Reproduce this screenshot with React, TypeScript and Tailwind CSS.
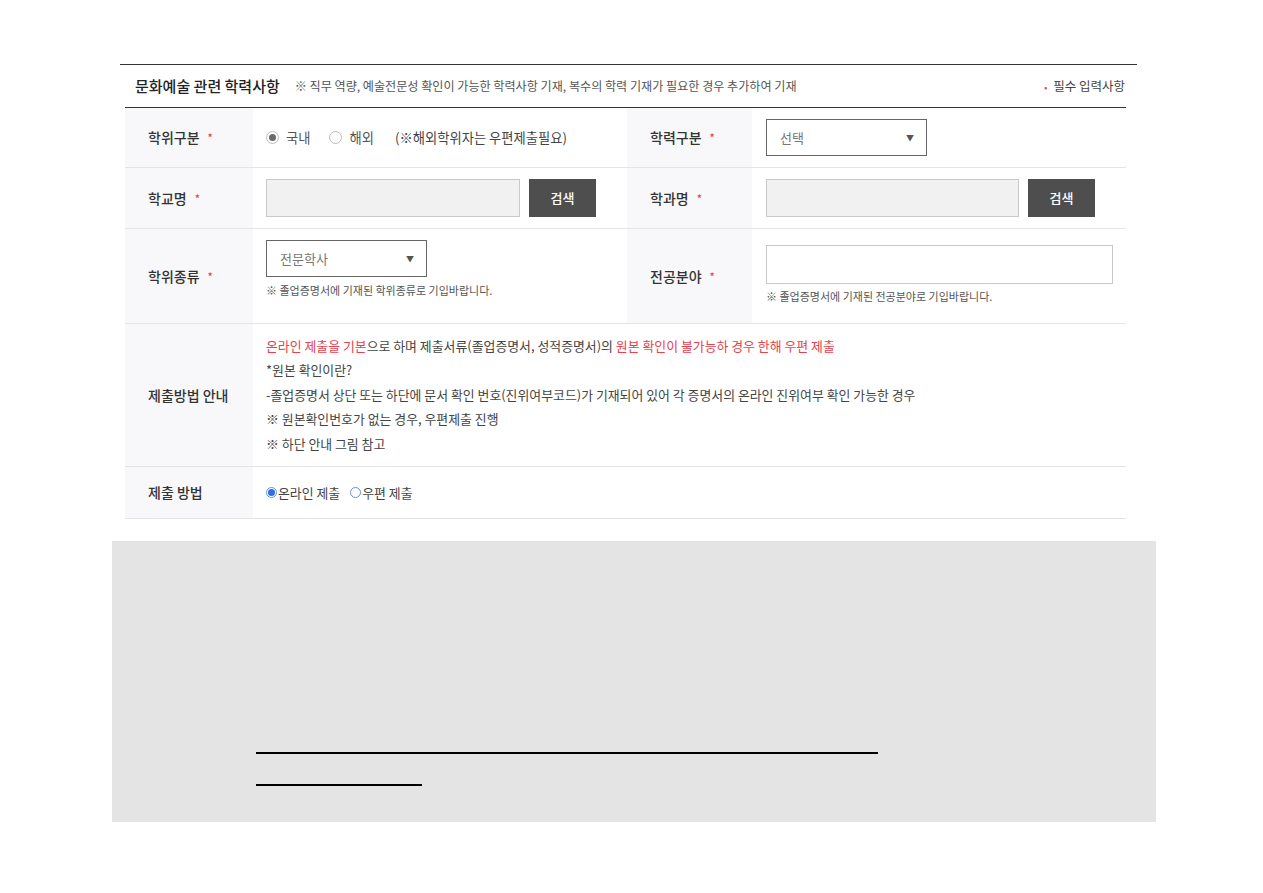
import * as React from "react";

const font = { fontFamily: '"Noto Sans CJK KR", "Noto Sans", sans-serif' };

function Req() {
  return <span className="ml-2 text-[11px] text-[#e8414e]">*</span>;
}

function Label({ children, req = true }: { children: React.ReactNode; req?: boolean }) {
  return (
    <div className="flex items-center bg-[#f8f8fa] pl-[23px] text-[14px] font-medium text-[#333]">
      {children}
      {req && <Req />}
    </div>
  );
}

function Radio({ checked, tone = "gray" }: { checked?: boolean; tone?: "gray" | "blue" }) {
  if (tone === "blue") {
    return (
      <span className="flex size-[11px] items-center justify-center rounded-full border border-[#6b8fd6] bg-white">
        {checked && <span className="size-[7px] rounded-full bg-[#2f6de1]" />}
      </span>
    );
  }
  return (
    <span className="flex size-[13px] items-center justify-center rounded-full border border-[#bdbdbd] bg-white">
      {checked && <span className="size-[7px] rounded-full bg-[#6a6a6a]" />}
    </span>
  );
}

function SelectBox({ value }: { value: string }) {
  return (
    <div className="flex h-[37px] w-[161px] items-center justify-between border border-[#666] bg-white pl-[13px] pr-[12px] text-[13px] text-[#777]">
      <span>{value}</span>
      <span className="text-[8px] text-[#555]">▼</span>
    </div>
  );
}

function SearchField({ width }: { width: string }) {
  return (
    <div className="flex items-center gap-[9px]">
      <div className={`h-[38px] ${width} border border-[#c9c9c9] bg-[#f1f1f1]`} />
      <button className="flex h-[38px] w-[67px] items-center justify-center bg-[#4e4e4e] text-[13px] font-medium text-white">
        검색
      </button>
    </div>
  );
}

export default function App() {
  return (
    <div className="min-h-[893px] bg-white pt-[64px]" style={font}>
      {/* section title */}
      <div className="ml-[120px] flex h-[43px] w-[1017px] items-center border-t border-[#333] pl-[15px] pr-[12px]">
        <span className="text-[15px] font-medium text-[#222]">문화예술 관련 학력사항</span>
        <span className="ml-[15px] text-[12.1px] text-[#555]">
          ※ 직무 역량, 예술전문성 확인이 가능한 학력사항 기재, 복수의 학력 기재가 필요한 경우 추가하여 기재
        </span>
        <span className="ml-auto text-[12.5px] text-[#444]">
          <span className="mr-[6px] text-[9px] text-[#e8414e]">•</span>필수 입력사항
        </span>
      </div>

      {/* form table */}
      <div className="ml-[125px] w-[1001px] border-t border-[#333]">
        <div className="grid h-[60px] grid-cols-[128px_374px_125px_374px] border-b border-[#e4e4e4]">
          <Label>학위구분</Label>
          <div className="flex items-center pl-[13px] text-[13.3px] text-[#555]">
            <Radio checked />
            <span className="ml-[7px]">국내</span>
            <span className="ml-[19px]">
              <Radio />
            </span>
            <span className="ml-[7px]">해외</span>
            <span className="ml-[21px] text-[#444]">(※해외학위자는 우편제출필요)</span>
          </div>
          <Label>학력구분</Label>
          <div className="flex items-center pl-[14px]">
            <SelectBox value="선택" />
          </div>
        </div>

        <div className="grid h-[61px] grid-cols-[128px_374px_125px_374px] border-b border-[#e4e4e4]">
          <Label>학교명</Label>
          <div className="flex items-center pl-[13px]">
            <SearchField width="w-[254px]" />
          </div>
          <Label>학과명</Label>
          <div className="flex items-center pl-[14px]">
            <SearchField width="w-[253px]" />
          </div>
        </div>

        <div className="grid h-[95px] grid-cols-[128px_374px_125px_374px] border-b border-[#e4e4e4]">
          <Label>학위종류</Label>
          <div className="flex flex-col pl-[13px] pt-[11px]">
            <SelectBox value="전문학사" />
            <p className="mt-[5px] text-[11px] text-[#555]">※ 졸업증명서에 기재된 학위종류로 기입바랍니다.</p>
          </div>
          <Label>전공분야</Label>
          <div className="flex flex-col pl-[14px] pt-[16px]">
            <div className="h-[39px] w-[347px] border border-[#c9c9c9] bg-white" />
            <p className="mt-[4px] text-[11px] text-[#555]">※ 졸업증명서에 기재된 전공분야로 기입바랍니다.</p>
          </div>
        </div>

        <div className="grid h-[143px] grid-cols-[128px_873px] border-b border-[#e4e4e4]">
          <Label req={false}>제출방법 안내</Label>
          <div className="flex flex-col justify-center pl-[13px] text-[12.9px] leading-[24.5px] text-[#444]">
            <p>
              <span className="text-[#e8414e]">온라인 제출을 기본</span>으로 하며 제출서류(졸업증명서, 성적증명서)의{" "}
              <span className="text-[#e8414e]">원본 확인이 불가능하 경우 한해 우편 제출</span>
            </p>
            <p>*원본 확인이란?</p>
            <p>-졸업증명서 상단 또는 하단에 문서 확인 번호(진위여부코드)가 기재되어 있어 각 증명서의 온라인 진위여부 확인 가능한 경우</p>
            <p>※ 원본확인번호가 없는 경우, 우편제출 진행</p>
            <p>※ 하단 안내 그림 참고</p>
          </div>
        </div>

        <div className="grid h-[52px] grid-cols-[128px_873px] border-b border-[#e4e4e4]">
          <Label req={false}>제출 방법</Label>
          <div className="flex items-center pl-[13px] text-[12.9px] text-[#444]">
            <Radio checked tone="blue" />
            <span className="ml-[1px]">온라인 제출</span>
            <span className="ml-[10px]">
              <Radio tone="blue" />
            </span>
            <span className="ml-[1px]">우편 제출</span>
          </div>
        </div>
      </div>

      {/* guide picture placeholder */}
      <div className="ml-[112px] mt-[22px] flex h-[281px] w-[1044px] flex-col bg-[#e4e4e4] pl-[144px] pt-[211px]">
        <div className="h-[2px] w-[622px] bg-black" />
        <div className="mt-[30px] h-[2px] w-[166px] bg-black" />
      </div>
    </div>
  );
}
